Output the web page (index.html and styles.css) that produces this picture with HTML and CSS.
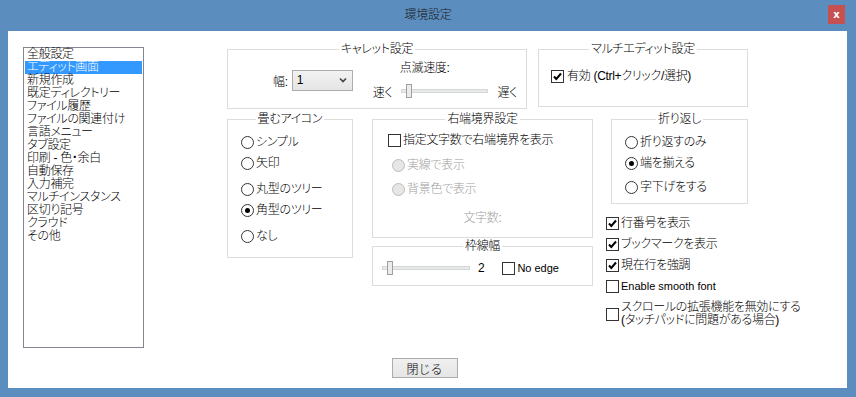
FILE: index.html
```html
<!DOCTYPE html>
<html lang="ja">
<head>
<meta charset="utf-8">
<title>環境設定</title>
<link rel="stylesheet" href="styles.css">
</head>
<body>
<div class="window">
  <div class="titlebar">
    <span class="title">環境設定</span>
    <button class="close">x</button>
  </div>
  <div class="client">
    <div class="main">
      <ul class="listbox">
        <li>全般設定</li>
        <li class="selected">エディット画面</li>
        <li>新規作成</li>
        <li>既定ディレクトリー</li>
        <li>ファイル履歴</li>
        <li>ファイルの関連付け</li>
        <li>言語メニュー</li>
        <li>タブ設定</li>
        <li>印刷 - 色・余白</li>
        <li>自動保存</li>
        <li>入力補完</li>
        <li>マルチインスタンス</li>
        <li>区切り記号</li>
        <li>クラウド</li>
        <li>その他</li>
      </ul>
      <div class="panel">
        <div class="row1">
          <section class="group caret">
            <div class="group-title">キャレット設定</div>
            <div class="caret-body">
              <span class="width-label">幅:</span>
              <div class="combo"><span>1</span><svg width="8" height="6" viewBox="0 0 8 6"><path d="M1 1.5 L4 4.5 L7 1.5" fill="none" stroke="#444" stroke-width="1.6"/></svg></div>
              <div class="blink">
                <div class="blink-label">点滅速度:</div>
                <div class="slider-row">
                  <span>速く</span>
                  <div class="slider"><div class="track"></div><div class="thumb"></div></div>
                  <span>遅く</span>
                </div>
              </div>
            </div>
          </section>
          <section class="group multi">
            <div class="group-title">マルチエディット設定</div>
            <div class="opt multi-opt"><span class="check"><svg width="11" height="11" viewBox="0 0 11 11"><path d="M2 5.5 L4.3 8 L9 2.5" fill="none" stroke="#000" stroke-width="2"/></svg></span>有効 (Ctrl+クリック/選択)</div>
          </section>
        </div>
        <div class="row2">
          <section class="group fold">
            <div class="group-title">畳むアイコン</div>
            <div class="opts">
              <div class="opt"><span class="radio"></span>シンプル</div>
              <div class="opt gap-s"><span class="radio"></span>矢印</div>
              <div class="opt gap-l"><span class="radio"></span>丸型のツリー</div>
              <div class="opt gap-s"><span class="radio on"></span>角型のツリー</div>
              <div class="opt gap-l"><span class="radio"></span>なし</div>
            </div>
          </section>
          <div class="mid">
            <section class="group edge">
              <div class="group-title">右端境界設定</div>
              <div class="opts edge-opts">
                <div class="opt"><span class="check"></span>指定文字数で右端境界を表示</div>
                <div class="opt disabled d1"><span class="radio"></span>実線で表示</div>
                <div class="opt disabled d2"><span class="radio"></span>背景色で表示</div>
              </div>
              <div class="chars">文字数:</div>
            </section>
            <section class="group frame">
              <div class="group-title">枠線幅</div>
              <div class="frame-body">
                <div class="slider frame-slider"><div class="track"></div><div class="thumb"></div></div>
                <span class="num">2</span>
                <div class="opt latin noedge"><span class="check"></span>No edge</div>
              </div>
            </section>
          </div>
          <div class="right">
            <section class="group wrap">
              <div class="group-title">折り返し</div>
              <div class="opts">
                <div class="opt"><span class="radio"></span>折り返すのみ</div>
                <div class="opt gap-s"><span class="radio on"></span>端を揃える</div>
                <div class="opt gap-m"><span class="radio"></span>字下げをする</div>
              </div>
            </section>
            <div class="checks">
              <div class="opt"><span class="check"><svg width="11" height="11" viewBox="0 0 11 11"><path d="M2 5.5 L4.3 8 L9 2.5" fill="none" stroke="#000" stroke-width="2"/></svg></span>行番号を表示</div>
              <div class="opt"><span class="check"><svg width="11" height="11" viewBox="0 0 11 11"><path d="M2 5.5 L4.3 8 L9 2.5" fill="none" stroke="#000" stroke-width="2"/></svg></span>ブックマークを表示</div>
              <div class="opt"><span class="check"><svg width="11" height="11" viewBox="0 0 11 11"><path d="M2 5.5 L4.3 8 L9 2.5" fill="none" stroke="#000" stroke-width="2"/></svg></span>現在行を強調</div>
              <div class="opt latin"><span class="check"></span>Enable smooth font</div>
              <div class="opt multiline"><span class="check"></span><span class="lines">スクロールの拡張機能を無効にする<br>(タッチパッドに問題がある場合)</span></div>
            </div>
          </div>
        </div>
      </div>
    </div>
    <div class="footer">
      <button class="btn">閉じる</button>
    </div>
  </div>
</div>
</body>
</html>
```
FILE: styles.css
```css
* { box-sizing: border-box; }
html, body { margin: 0; padding: 0; }
body {
  width: 856px;
  height: 397px;
  overflow: hidden;
  font-family: "Liberation Sans", "Noto Sans CJK JP", sans-serif;
  font-size: 12px;
  font-weight: 300;
  letter-spacing: -0.3px;
  color: #000;
  font-feature-settings: "palt";
}
.window {
  width: 856px;
  height: 397px;
  background: #5b8dbf;
  display: flex;
  flex-direction: column;
}
.titlebar {
  height: 31px;
  flex: none;
  display: grid;
  grid-template-columns: 1fr auto 1fr;
  align-items: start;
}
.title {
  grid-column: 2;
  margin-top: 8px;
  line-height: 14px;
  color: #1a1a1a;
}
.close {
  grid-column: 3;
  justify-self: end;
  margin: 5px 11px 0 0;
  width: 17px;
  height: 19px;
  border: none;
  padding: 0;
  background: #c75050;
  color: #fff;
  font: bold 10px "DejaVu Sans", sans-serif;
  line-height: 17px;
}
.client {
  margin: 0 9px 9px 8px;
  flex: 1;
  background: #fff;
  display: flex;
  flex-direction: column;
}
.main {
  display: flex;
  align-items: flex-start;
  padding: 16px 0 0 15px;
}
.listbox {
  list-style: none;
  margin: 0;
  padding: 0 1px;
  width: 121px;
  height: 301px;
  border: 1px solid #828790;
  flex: none;
}
.listbox li {
  height: 13px;
  line-height: 13px;
  padding-left: 2px;
  white-space: nowrap;
}
.listbox li.selected { background: #3399ff; color: #fff; }

.panel {
  margin: 2px 0 0 83px;
  display: flex;
  flex-direction: column;
}
.row1 { display: flex; align-items: flex-start; gap: 11px; }
.row2 { display: flex; align-items: flex-start; margin-top: 10px; }
.group { border: 1px solid #dcdcdc; flex: none; }
.group-title {
  display: table;
  margin: -8px auto 0;
  padding: 0 2px;
  height: 14px;
  line-height: 14px;
  background: #fff;
  white-space: nowrap;
}

.opt {
  display: flex;
  align-items: center;
  height: 14px;
  line-height: 14px;
  white-space: nowrap;
}
.opt.latin { font-size: 11px; letter-spacing: 0; }
.check {
  width: 13px;
  height: 13px;
  border: 1px solid #333;
  background: #fff;
  margin-right: 3px;
  display: flex;
  flex: none;
}
.radio {
  width: 13px;
  height: 13px;
  border: 1px solid #333;
  border-radius: 50%;
  background: #fff;
  margin-right: 2px;
  display: flex;
  align-items: center;
  justify-content: center;
  flex: none;
}
.radio.on::after {
  content: "";
  width: 5px;
  height: 5px;
  border-radius: 50%;
  background: #000;
}
.disabled { color: #a0a0a0; }
.disabled .radio { border-color: #bcbcbc; background: #e6e6e6; }

/* caret */
.caret { width: 300px; height: 60px; }
.caret-body {
  display: flex;
  align-items: center;
  height: 52px;
  padding: 0 0 4px 45px;
}
.combo {
  margin-left: 4px;
  width: 61px;
  height: 21px;
  border: 1px solid #acacac;
  background: linear-gradient(#f2f2f2, #e5e5e5);
  display: flex;
  align-items: center;
  justify-content: space-between;
  padding: 0 5px 0 4px;
}
.blink { margin-left: 20px; display: flex; flex-direction: column; }
.blink-label { margin-left: 27px; line-height: 14px; height: 14px; }
.slider-row { display: flex; align-items: center; height: 16px; margin-top: 8px; }
.slider {
  position: relative;
  width: 87px;
  height: 16px;
  margin: 0 9px;
  display: flex;
  align-items: center;
}
.track {
  width: 100%;
  height: 4px;
  background: #e7eaea;
  border: 1px solid #d6d6d6;
}
.thumb {
  position: absolute;
  top: 1px;
  left: 5px;
  width: 6px;
  height: 14px;
  background: #ececec;
  border: 1px solid #a0a0a0;
}

/* multi */
.multi { width: 210px; height: 58px; }
.multi-opt { margin: 13px 0 0 12px; }

/* fold */
.fold { width: 126px; height: 139px; }
.opts { padding: 9px 0 0 13px; }
.gap-s { margin-top: 7px; }
.gap-m { margin-top: 10px; }
.gap-l { margin-top: 12px; }

/* middle */
.mid { margin-left: 19px; width: 221px; display: flex; flex-direction: column; gap: 8px; }
.edge { height: 119px; }
.edge-opts { padding: 7px 0 0 15px; }
.edge-opts .check { margin-right: 2px; }
.d1 { margin: 11px 0 0 4px; }
.d2 { margin: 10px 0 0 4px; }
.chars { margin-top: 15px; text-align: center; color: #a0a0a0; line-height: 14px; }
.frame { height: 40px; }
.frame-body { display: flex; align-items: center; height: 16px; margin-top: 7px; padding-left: 9px; }
.frame-slider { width: 88px; margin: 0 8px 0 0; }
.num { font-size: 12px; }
.noedge { margin-left: 18px; }
.noedge .check { margin-right: 2px; }

/* right */
.right { margin-left: 13px; display: flex; flex-direction: column; }
.wrap { margin-left: 5px; width: 137px; height: 85px; }
.checks { margin-top: 12px; display: flex; flex-direction: column; gap: 7px; }
.checks .check { margin-right: 2px; }
.multiline { height: 26px; margin-top: 1px; }
.lines { line-height: 13px; }

.footer { display: flex; justify-content: center; margin-top: 10px; padding-right: 6px; }
.btn {
  width: 66px;
  height: 20px;
  border: 1px solid #acacac;
  background: linear-gradient(#f0f0f0, #e5e5e5);
  font: 300 12px "Liberation Sans", "Noto Sans CJK JP", sans-serif;
  color: #000;
  padding: 0;
}
```
